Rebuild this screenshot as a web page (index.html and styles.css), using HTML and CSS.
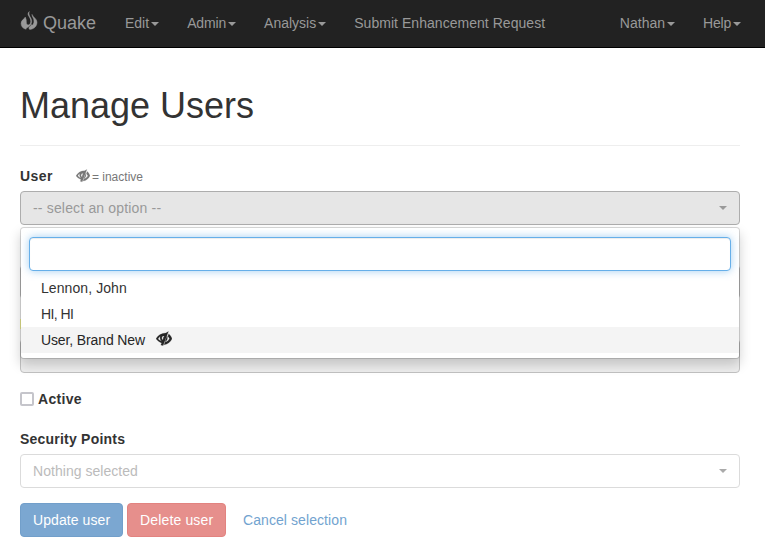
FILE: index.html
```html
<!DOCTYPE html>
<html lang="en">
<head>
<meta charset="utf-8">
<title>Quake</title>
<link rel="stylesheet" href="styles.css">
</head>
<body>
<svg class="defs" aria-hidden="true">
  <symbol id="eye" viewBox="0 0 16 16">
    <path fill-rule="evenodd" d="M12.400.6 7.100 14.600l-2.200-.5.8-2.200C3.400 11 1.400 9.700 0 7.700 2.200 4.400 5.400 2.100 9.900 2.100zM4.200 5.200C3.200 6 2.700 6.800 2.100 7.700c1 1.300 2 2.100 3.700 2.500C4.300 9 3.700 7.200 4.200 5.200zM6.300 5.600c-.9 1.200-.6 2.600.5 3.400l.5-1.300c-.3-.7 0-1.300.7-1.700l.2-.9c-.8-.1-1.400 0-1.900.5z"/>
    <path d="M12.800 2.900c1.400 1.100 2.400 2.700 3.200 4.800-1.600 3.300-4.200 5.600-7.900 6l.9-2.500c2-.4 3.600-1.600 4.500-3.500-.5-1-1-1.700-1.700-2.400zM11 5c1 2.600.1 4.700-2 5.800z"/>
  </symbol>
</svg>
<nav class="navbar">
  <a class="brand"><svg class="fire" viewBox="0 0 18 20"><path d="M9.300.6C7.600 2.200 7.700 3.500 8.900 5.300c1.600 2.300 2.300 4.500 1.600 6.800-.5 1.800-2.700 2.500-3.600 1.200-1.100-1.400.2-3.800-1.700-7.200C4.700 8.200 1.100 8.700 1.100 12.600c0 2.900 1.900 5 5 5.600-.1-.6.200-1.100.8-1.500 3.700-1.900 5.300-4.400 4.600-7.800C10.900 6.200 7.900 4 9.300.6z"/><path d="M12 3.400c-.2 2 1.200 3 1.700 4.900.7 2.500.1 4.900-1.200 5.600-.5.300-.8.100-.9-.4-.5 1.500-2.700 2.100-2.700 3.600 0 .6.300 1 .9 1.300 4.200-.4 7.200-3 7.200-7.200 0-3.500-3.700-4.500-5-7.800z"/></svg>Quake</a>
  <a class="item">Edit<b class="caret"></b></a>
  <a class="item tight">Admin<b class="caret"></b></a>
  <a class="item">Analysis<b class="caret"></b></a>
  <a class="item request">Submit Enhancement Request</a>
  <a class="item right">Nathan<b class="caret"></b></a>
  <a class="item help">Help<b class="caret"></b></a>
</nav>
<main class="page">
  <h1>Manage Users</h1>
  <div class="group picker">
    <div class="label-row"><label class="wide">User</label><span class="hint"><svg class="eye"><use href="#eye"/></svg>= inactive</span></div>
    <div class="control open"><span>-- select an option --</span><b class="caret"></b></div>
    <div class="menu">
      <input class="search" type="text" aria-label="Search">
      <ul>
        <li>Lennon, John</li>
        <li class="initials">HI, HI</li>
        <li class="active">User, Brand New<svg class="eye"><use href="#eye"/></svg></li>
      </ul>
    </div>
  </div>
  <div class="group"><div class="label-row"></div><div class="control readonly"></div></div>
  <div class="group"><div class="label-row"><span class="mark"></span></div><div class="control readonly"></div></div>
  <div class="check"><span class="box"></span><label>Active</label></div>
  <div class="group">
    <div class="label-row points"><label>Security Points</label></div>
    <div class="control disabled"><span>Nothing selected</span><b class="caret"></b></div>
  </div>
  <div class="actions">
    <button class="btn primary">Update user</button>
    <button class="btn danger">Delete user</button>
    <button class="btn link">Cancel selection</button>
  </div>
</main>
</body>
</html>
```
FILE: styles.css
```css
* { box-sizing: border-box; }
body {
  margin: 0;
  height: 550px;
  overflow: hidden;
  background: #fff;
  color: #333;
  font: 14px/20px "Liberation Sans", Arial, sans-serif;
}
.defs { position: absolute; width: 0; height: 0; }
.navbar {
  display: flex;
  height: 48px;
  padding: 0 10px 0 20px;
  background: #222;
  border-bottom: 1px solid #000;
  color: #999;
}
.brand {
  display: flex;
  width: 91px;
  padding-top: 13px;
  font-size: 18px;
}
.fire {
  width: 18px;
  height: 20px;
  margin: -2px 5px 0 0;
  fill: #999;
  stroke: #999;
  stroke-width: .5;
}
.item { padding: 13px 14px 0; white-space: nowrap; }
.tight { letter-spacing: -.15px; }
.request { letter-spacing: .04px; }
.item.right { margin-left: auto; }
.help { letter-spacing: -.2px; }
.caret {
  display: inline-block;
  margin-left: 2px;
  vertical-align: middle;
  border-top: 4px solid;
  border-left: 4px solid transparent;
  border-right: 4px solid transparent;
}
.page { padding: 37px 25px 0 20px; }
h1 {
  height: 61px;
  margin: 0 0 20px;
  border-bottom: 1px solid #eee;
  font-size: 36px;
  line-height: 42px;
  font-weight: 400;
}
.group { margin-bottom: 15px; }
.picker { position: relative; }
.label-row { display: flex; height: 20px; margin-bottom: 5px; }
label { font-weight: 700; letter-spacing: .3px; }
.wide { letter-spacing: .45px; }
.points label { letter-spacing: .22px; }
.hint {
  display: flex;
  margin-left: 23px;
  padding-top: 1px;
  font-size: 12px;
  color: #777;
}
.eye {
  width: 15px;
  height: 15px;
  fill: currentColor;
  stroke: currentColor;
  stroke-width: .25;
}
.hint .eye { width: 14px; height: 14px; margin: 2px 2px 0 0; }
.control {
  display: flex;
  align-items: center;
  justify-content: space-between;
  height: 34px;
  padding: 0 12px;
  border: 1px solid #ccc;
  border-radius: 4px;
}
.open { background: #e6e6e6; border-color: #adadad; color: #999; letter-spacing: .17px; }
.readonly { background: #eee; border-color: #c2c2c2; }
.disabled { border-color: #dbdbdb; color: #bbb; letter-spacing: .04px; }
.disabled .caret { color: #aaa; }
.mark { width: 3px; height: 10px; margin-top: 5px; background: #ffff9c; }
.menu {
  position: absolute;
  z-index: 2;
  top: 61px;
  left: 0;
  width: 100%;
  height: 132px;
  padding: 9px 0 5px;
  background: #fff;
  background-clip: padding-box;
  border: 1px solid rgba(0, 0, 0, .15);
  border-radius: 4px;
  box-shadow: 0 6px 12px rgba(0, 0, 0, .175);
}
.search {
  display: block;
  width: 702px;
  height: 34px;
  margin: 0 8px 4px;
  border: 1px solid #66afe9;
  border-radius: 4px;
  outline: 0;
  box-shadow: inset 0 1px 1px rgba(0, 0, 0, .075), 0 0 8px rgba(102, 175, 233, .6);
}
ul { margin: 0; padding: 0; list-style: none; }
li { display: flex; height: 26px; padding: 3px 20px; letter-spacing: .08px; }
.initials { letter-spacing: -.65px; word-spacing: .3px; }
li.active { background: #f4f4f4; color: #262626; letter-spacing: -.12px; }
li .eye { width: 16px; height: 16px; margin: 1px 0 0 11px; }
.check { display: flex; height: 20px; margin: 16px 0 20px; }
.box { width: 14px; height: 14px; margin: 3px 4px 0 0; border: 2px solid #c5c5cb; border-radius: 2px; }
.actions { display: flex; gap: 4px; }
.btn {
  height: 34px;
  padding: 0 12px;
  border: 1px solid;
  border-radius: 4px;
  color: #fff;
  font: inherit;
  letter-spacing: .08px;
  white-space: nowrap;
}
.primary { width: 103px; background: #7ba7d1; border-color: #729fca; }
.danger { width: 99px; background: #e68f8c; border-color: #e28380; letter-spacing: .15px; }
.link { background: none; border-color: transparent; color: #72a3cf; }
```
